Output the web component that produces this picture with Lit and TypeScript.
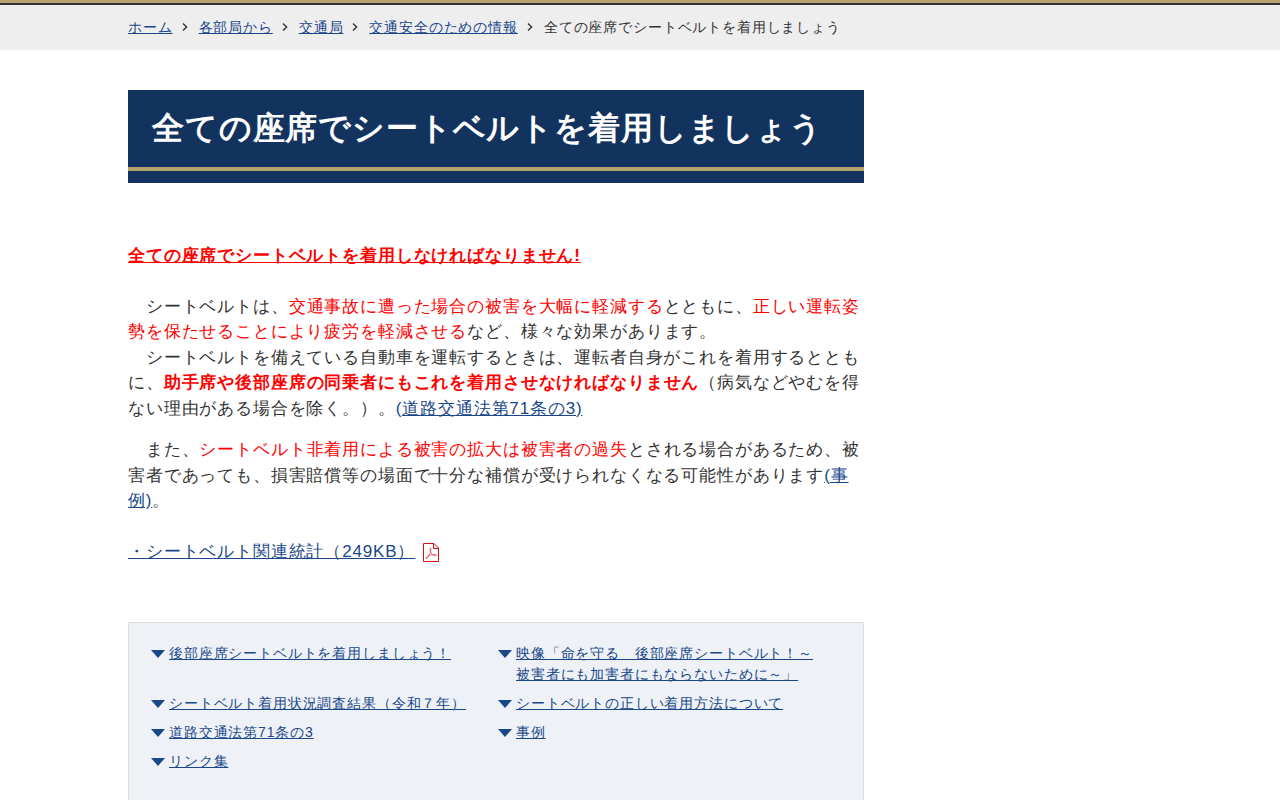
import { LitElement, html, css } from "lit";
import { customElement } from "lit/decorators.js";

const TITLE = "全ての座席でシートベルトを着用しましょう";

const CRUMBS = ["ホーム", "各部局から", "交通局", "交通安全のための情報"];

const ANCHORS = [
  "後部座席シートベルトを着用しましょう！",
  "映像「命を守る　後部座席シートベルト！～被害者にも加害者にもならないために～」",
  "シートベルト着用状況調査結果（令和７年）",
  "シートベルトの正しい着用方法について",
  "道路交通法第71条の3",
  "事例",
  "リンク集",
];

@customElement("app-root")
export class AppRoot extends LitElement {
  static styles = css`
    :host {
      display: block;
      min-height: 100vh;
      background: #fff;
      color: #333;
      font-family: "Liberation Sans", sans-serif;
      font-size: 17px;
      line-height: 1.5;
      letter-spacing: 0.05em;
      text-spacing-trim: space-all;
    }
    a {
      color: #1a478a;
      text-decoration: underline;
    }
    .wrap {
      width: 80%;
      margin: 0 auto;
    }
    .topline {
      height: 3px;
      background: #b3a36b;
      border-bottom: 2px solid #333;
    }
    .crumbs {
      background: #eee;
      padding: 12px 0;
      font-size: 14px;
    }
    .crumb-list {
      display: flex;
      flex-wrap: wrap;
      list-style: none;
      margin: 0 auto;
      padding: 0;
    }
    .crumb {
      display: flex;
      align-items: center;
    }
    .chevron {
      width: 6px;
      height: 8px;
      margin: 0 11px 1px 9px;
    }
    .layout {
      display: grid;
      grid-template-columns: minmax(0, 1fr) 256px;
      gap: 32px;
      padding-top: 40px;
    }
    .title {
      margin: 0 0 60px;
      background: #13335f;
      border-bottom: 12px solid #13335f;
      color: #fff;
    }
    .title-text {
      display: block;
      padding: 14px 24px 15px;
      border-bottom: 4px solid #b3a36b;
      font-size: 32px;
      line-height: 48px;
    }
    .para {
      margin: 0 0 16px;
    }
    .lead {
      margin: 0 0 25px;
      font-weight: bold;
      text-decoration: underline;
    }
    .red {
      color: #f00;
    }
    .file {
      margin: 25px 0 0;
    }
    .pdf {
      width: 16px;
      height: 19px;
      margin-left: 8px;
      vertical-align: -5px;
    }
    .index {
      margin-top: 58px;
      padding: 20px 18px 40px 22px;
      border: 1px solid #ddd;
      background: #eef2f7;
      font-size: 14px;
    }
    .index-list {
      display: grid;
      grid-template-columns: 1fr 1fr;
      row-gap: 8px;
      list-style: none;
      margin: 0;
      padding: 0;
    }
    .index-item {
      display: flex;
      align-items: flex-start;
      gap: 4px;
      padding-right: 20px;
    }
    .arrow {
      flex: none;
      width: 14px;
      height: 8px;
      margin-top: 7px;
      background: #1a478a;
      clip-path: polygon(0 0, 100% 0, 50% 100%);
    }
  `;

  render() {
    return html`
      <div class="topline"></div>
      <nav class="crumbs" aria-label="パンくず">
        <ol class="wrap crumb-list">
          ${CRUMBS.map(
            (c) => html`<li class="crumb">
              <a href="#">${c}</a>
              <svg class="chevron" viewBox="0 0 6 8" fill="none" stroke="#333" stroke-width="1.4" aria-hidden="true">
                <path d="M1 0.5 4.6 4 1 7.5" />
              </svg>
            </li>`
          )}
          <li class="crumb">${TITLE}</li>
        </ol>
      </nav>
      <div class="wrap layout">
        <main>
          <h1 class="title"><span class="title-text">${TITLE}</span></h1>
          <p class="lead red">全ての座席でシートベルトを着用しなければなりません!</p>
          <p class="para">　シートベルトは、<span class="red">交通事故に遭った場合の被害を大幅に軽減する</span>とともに、<span class="red">正しい運転姿勢を保たせることにより疲労を軽減させる</span>など、様々な効果があります。<br />　シートベルトを備えている自動車を運転するときは、運転者自身がこれを着用するとともに、<strong class="red">助手席や後部座席の同乗者にもこれを着用させなければなりません</strong>（病気などやむを得ない理由がある場合を除く。）。<a href="#">(道路交通法第71条の3)</a></p>
          <p class="para">　また、<span class="red">シートベルト非着用による被害の拡大は被害者の過失</span>とされる場合があるため、被害者であっても、損害賠償等の場面で十分な補償が受けられなくなる可能性があります<a href="#">(事例)</a>。</p>
          <p class="file"><a href="#">・シートベルト関連統計（249KB）</a><svg class="pdf" viewBox="0 0 16 19" fill="none" stroke="#d40f14" aria-hidden="true">
              <path d="M0.5 0.5H11L15.5 5V18.5H0.5Z" stroke-width="1" />
              <path d="M10.5 0.8V5.5H15.2" stroke-width="1" />
              <path d="M7.2 5.2C8.4 4.8 8 7.5 7.4 9.6C6.4 12.4 4.2 15.6 3 15.6C2.2 15 4.8 12.7 7.4 12C10 11.3 13.6 11.4 13.4 12.6C12.6 13.4 9.6 12.2 8.2 10.2C7 8.4 6.6 5.6 7.2 5.2Z" stroke-width="0.6" />
            </svg></p>
          <nav class="index" aria-label="目次">
            <ul class="index-list">
              ${ANCHORS.map(
                (t) => html`<li class="index-item"><span class="arrow"></span><a href="#">${t}</a></li>`
              )}
            </ul>
          </nav>
        </main>
      </div>
    `;
  }
}
